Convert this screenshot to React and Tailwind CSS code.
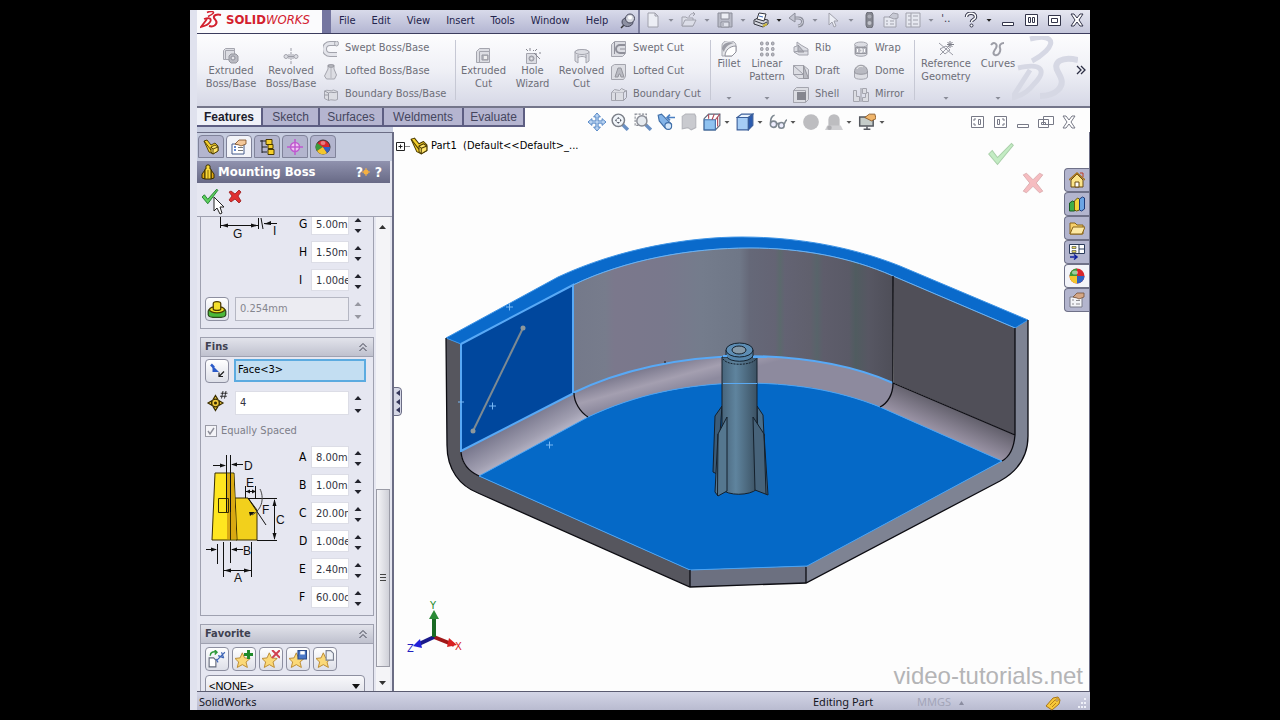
import React, { useState } from 'react'

const Icon = ({ size = 16, children }) => (
  <svg width={size} height={size} viewBox="0 0 16 16" fill="none" className="shrink-0" aria-hidden="true">
    {children}
  </svg>
)

const Caret = ({ color = '#8a8c98' }) => (
  <svg width="8" height="8" viewBox="0 0 8 8" className="shrink-0" aria-hidden="true">
    <path d="M1.5 3h5L4 5.8z" fill={color} />
  </svg>
)

/* ---------- ribbon icons (greyed out) ---------- */
const g = { stroke: '#a4a5ae', fill: '#dcdde3', strokeWidth: 1, strokeLinejoin: 'round' }
const d = { stroke: '#96979f', fill: '#b9bac2', strokeWidth: 1, strokeLinejoin: 'round' }

const ribbonIcons = {
  extrude: <><path {...g} d="M.5 2.5l2-2h9v9l-2 2h-9z" /><path {...g} d="M2.5 2.5h9v9h-9z" /><path {...d} d="M6 8l2-2h5l2 2v5l-2 2H8l-2-2z" /><circle cx="10" cy="10" r="2" fill="#e4e4e9" stroke="#8f909a" /></>,
  revolve: <><path stroke="#9b9ca6" d="M8 0v3M8 4v8M8 13v3" /><circle {...g} cx="3" cy="8.500" r="2" /><circle {...g} cx="13" cy="8.500" r="2" /><path stroke="#9b9ca6" d="M5 8.500h6M6 6v5M10 6v5" /></>,
  swept: <><path d="M14 2.500H7a5 5 0 0 0 0 11h7" stroke="#a2a3ac" strokeWidth="5" /><path d="M14 2.500H7a5 5 0 0 0 0 11h7" stroke="#e3e4ea" strokeWidth="3" /><ellipse {...g} cx="13.500" cy="2.500" rx="2" ry="2.500" /></>,
  loft: <><path {...g} d="M5 1h6v4l2.500 6-2 4h-8L1.500 12 5 5z" /><ellipse {...d} cx="8" cy="2" rx="3" ry="1.300" /><path stroke="#b5b6be" d="M8 4v10" /></>,
  boundary: <><path {...g} d="M1.500 4c3-2 6 1 9-1l4 1.500v8c-3 2-6-1-9 1l-4-2z" /><path stroke="#9b9ca6" d="M1.500 4l4 2c3-2 6 1 9-1.500M5.500 6v7.500M1 8h4" /></>,
  cut: <><path {...g} d="M.5 3.500l3-3h10v11l-3 3H.5z" /><path {...g} d="M3.500 3.500h10v11h-10z" /><path {...d} d="M6 7h6v5H6z" /><path fill="#eee" d="M8 8h3v3H8z" /></>,
  hole: <><path {...g} d="M1.500 5.500h10v10h-10z" /><circle {...d} cx="6.500" cy="10.500" r="2.500" /><circle cx="6.500" cy="10.500" r="1" fill="#eee" /><path stroke="#85868f" d="M9 5l6 6M1 1l2 2M5 0v3M12 1l-2 2M8 2l1 1M14 5h2" /></>,
  revcut: <><path {...g} d="M1 4c0-3 14-3 14 0v9l-3 2v-5c-1-2-7-2-8 0v5l-3-2z" /><ellipse {...g} cx="8" cy="4" rx="7" ry="2.500" /><path stroke="#9b9ca6" d="M4 10V7M12 10V7" /></>,
  sweptcut: <><path {...g} d="M.5 3.500l3-3h11v12l-3 3H.5z" /><path stroke="#8f909a" strokeWidth="2" d="M14 4H9a2.500 2.500 0 0 0 0 8h5" /><path stroke="#8f909a" d="M14 8H9M3.500 1v12" /></>,
  loftcut: <><path {...g} d="M.5 2.500l3-2h11v12l-2 3H.5z" /><path {...d} d="M7 4h3l3 9h-3l-1-3H8l-1 3H4z" /></>,
  boundcut: <><path {...g} d="M.5 5.500h12v8H.5z" /><path {...g} d="M.5 5.500l3-3 5 1 2-2 4 2-2 2" /><path stroke="#9b9ca6" d="M4.500 6v7M12.500 5.500l3-2v7l-3 3" /></>,
  fillet: <><path d="M1 15V5a7 5 0 0 1 14-1v6l-4 5z" fill="#e5e6ea" stroke="#a7a8b0" /><path d="M4 15c0-6 5-10 11-10v6l-4 4z" fill="#fff" stroke="#8f909a" /><path d="M1 8c0-5 6-8 12-6-5 1-9 4-10 9z" fill="#9c9da6" /></>,
  pattern: <>{[1.5, 7, 12.5].map(x => [1, 6.5, 12].map(y => <rect key={x + '-' + y} x={x} y={y} width="2.500" height="3" rx="1" {...d} />))}</>,
  rib: <><path {...g} d="M1 6l3-1V1l4 3 7 4v6H6l-5-3z" /><path {...d} d="M5 11V4l6 7z" /><path stroke="#9b9ca6" d="M1 11l5-1h9" /></>,
  draft: <><path {...g} d="M.5 1.500h10l5 4v9h-10l-5-4z" /><path {...d} d="M10.500 1.500l5 13h-5z" /><path stroke="#9b9ca6" d="M.5 1.500l10 9M.5 10.500h10" /></>,
  shell: <><path {...g} d="M.5 3.500l3-3h12v12l-3 3H.5z" /><path {...g} d="M.5 3.500h12v12H.5z" /><path d="M4 5h9v8H4z" fill="#85868f" /></>,
  wrap: <><path {...g} d="M2 4v9c0 3 12 3 12 0V4" /><ellipse {...g} cx="8" cy="3.500" rx="6.500" ry="2.500" /><path {...d} d="M2.500 6.500h11v6h-11z" /><path stroke="#fff" d="M4.500 8v3M7 8h2v3H7M11.500 8v3" /></>,
  dome: <><path {...g} d="M1.500 8v5c0 3 13 3 13 0V8" /><path {...d} d="M1.500 8C1.500-1 14.500-1 14.500 8c0 3-13 3-13 0z" /><path d="M4 5c1-3 5-3 6-2" stroke="#eee" /></>,
  mirror: <><path {...g} d="M.5 3.500h3v6h3v5h-6zM15.500 5.500h-3v5h-3v4h6z" /><path {...d} d="M8 1v14" /><path {...g} d="M9.500 1.500h4v5h-4z" /></>,
  refgeo: <><path stroke="#9b9ca6" d="M1 2l14 12M2 14L13 3M2 8l5 5 5-4-4-4z" /><path stroke="#7e7f89" d="M12 0v7M9 3.500h7M9.500 1l5 5M14.500 1l-5 5" /></>,
  curves: <path d="M1 4c3-4 7-1 5 3-2 3-4 6-1 7 4 1 6-4 5-7-1-3 1-5 4-5" stroke="#9d9ea7" strokeWidth="2" />,
}

const BigButton = ({ icon, lines, width, low, caret }) => (
  <button className={`flex flex-col items-center ${width} ${low ? 'pt-[14px]' : 'pt-[7px]'} text-[#6d6e78] leading-[13px]`}>
    <Icon size={16}>{ribbonIcons[icon]}</Icon>
    {lines.map(l => <span key={l} className="whitespace-nowrap">{l}</span>)}
    {caret && <span className="mt-auto pb-[4px]"><Caret /></span>}
  </button>
)

const RibbonList = ({ items, className }) => (
  <ul className={`pt-[3px] ${className}`}>
    {items.map(([icon, text]) => (
      <li key={text}>
        <button className="flex h-[23px] items-center gap-[6px] whitespace-nowrap text-[#6d6e78]">
          <Icon>{ribbonIcons[icon]}</Icon>
          {text}
        </button>
      </li>
    ))}
  </ul>
)

const Divider = () => <div className="my-[6px] w-px shrink-0 bg-[#c6c8d4]" />

/* ---------- top bar ---------- */
const menus = ['File', 'Edit', 'View', 'Insert', 'Tools', 'Window', 'Help']

const gs = '#a0a1ac'
const quick = [
  ['New', <path key="a" d="M3 1h7l3 3v11H3zM10 1v3h3" stroke={gs} fill="#eceef5" />, true],
  ['Open', <g key="a" stroke={gs} fill="#dcdee8"><path d="M1 5h4l1 1h6v8H1z" /><path d="M1 14l3-6h11l-3 6z" /><path d="M8 5c1-3 3-4 5-3M12 0l2 2-2 2" fill="none" /></g>, true],
  ['Save', <g key="a" stroke="#8c8e9a" fill="#b9bbc7"><path d="M1 1h14v14H1z" /><path d="M4 1h8v6H4z" fill="#eceef5" /><path d="M4 10h8v5H4z" fill="#dfe1ea" /><path d="M6 11v3" /></g>, true],
  ['Print', <g key="a" stroke="#34363f"><path d="M1 8l4-2 10 2v4l-5 3-9-3z" fill="#d5d7de" /><path d="M4 7l2-6 7 1-2 7z" fill="#fff" /><path d="M6 4l4 1" stroke="#3a6cc0" /><path d="M2 9l8 3 4-2" /><path d="M10 14l4-2" stroke="#c9b53a" strokeWidth="2" /></g>, true, '#222'],
  ['Undo', <g key="a"><path d="M3 6h6c6 0 6 7 0 8" stroke="#8c8e9a" strokeWidth="3" /><path d="M3 6h6c6 0 6 7 0 8" stroke="#d3d5df" /><path d="M6 1v9L0 6z" fill="#c4c6d2" stroke="#8c8e9a" /></g>, true],
  ['Select', <path key="a" d="M4 1v12l3-3 2 5 2-1-2-5h4z" stroke={gs} fill="#eceef5" />, true],
  ['Rebuild', <g key="a"><rect x="5" y="0" width="7" height="16" rx="3" fill="#84868f" stroke="#6d6f79" /><circle cx="8.500" cy="4.500" r="2" fill="#a9abb4" /><circle cx="8.500" cy="11" r="2" fill="#bfc1c9" /></g>],
  ['File Properties', <g key="a" stroke={gs} fill="#e6e8f0"><path d="M1 5h12v10H1z" /><path d="M3 9h2M7 9h4M3 12h2M7 12h4" /><path d="M6 5l4-4 5 1v4l-4 1z" fill="#c7c9d4" /></g>],
  ['Options', <g key="a" stroke={gs}><path d="M1 1h14v14H1z" fill="#e6e8f0" /><path d="M3 4h3M3 8h3M3 12h3M6 1v14M8 4h5M8 8h5M8 12h5" /></g>, true],
]

const WindowButton = ({ label, color, children }) => (
  <button aria-label={label}>
    <Icon><g stroke={color} fill="#fff">{children}</g></Icon>
  </button>
)

const closePath = 'M2 2h3l3 4 3-4h3l-4 6 4 6h-3l-3-4-3 4H2l4-6z'

const TopBar = () => (
  <header className="flex h-[24px] shrink-0 border-b border-[#3c3d5e]">
    <div className="flex w-[125px] shrink-0 items-center bg-[#fbfbfd] pb-[4px] pl-[3px] text-[13px] leading-[16px] text-[#d3202e]">
      <svg width="22" height="18" viewBox="0 0 22 18" fill="none" stroke="#d3202e" aria-hidden="true">
        <path d="M7 1.500c4-2 8-1 6 1-1 1-3 2-5 3" strokeWidth="1.500" />
        <path d="M4 8c6-2 8 0 6 3-2 3-5 4-9 5l6-8" strokeWidth="1.800" />
        <path d="M21 4c-4-1-8 0-7 3 1 2 4 3 2 6-1 2-4 3-7 2" strokeWidth="2" />
      </svg>
      <span className="pl-[4px]"><b>SOLID</b><i>WORKS</i></span>
    </div>
    <div className="w-[9px] shrink-0 bg-[#7576a0]" />
    <nav className="flex shrink-0 items-center gap-4 border-r-2 border-[#7f81a0] bg-linear-to-b from-[#d8daea] to-[#b4b6d2] pr-[2px] pb-px pl-[8px] text-[#23244c]">
      {menus.map(m => <a key={m} href="#">{m}</a>)}
      <button aria-label="Pin menu" className="-ml-[4px]">
        <Icon>
          <path d="M1 15l5-5" stroke="#333" strokeWidth="1.500" />
          <ellipse cx="7.500" cy="9" rx="5.500" ry="4.500" fill="#8d90a2" stroke="#44465a" />
          <circle cx="10" cy="5.500" r="4.500" fill="#d3d5de" stroke="#44465a" />
          <circle cx="10" cy="4.500" r="2" fill="#fff" />
        </Icon>
      </button>
    </nav>
    <div className="flex min-w-0 flex-1 items-center gap-[6px] bg-linear-to-b from-[#e6e7f1] to-[#c5c7db] px-[5px] pb-[4px]">
      {quick.map(([label, art, caret, color]) => (
        <React.Fragment key={label}>
          <button aria-label={label}><Icon>{art}</Icon></button>
          {caret && <Caret color={color} />}
        </React.Fragment>
      ))}
      <span className="text-[#33354a]">'..</span>
      <div className="ml-auto flex items-center gap-[7px]">
        <button aria-label="Help" className="flex items-center gap-[6px]">
          <Icon>
            <path d="M3.500 5c0-5 9-5 9 0 0 3-4 2-4 5" stroke="#33354a" strokeWidth="3.500" />
            <path d="M3.500 5c0-5 9-5 9 0 0 3-4 2-4 5" stroke="#fff" strokeWidth="1.500" />
            <circle cx="8.500" cy="13.500" r="1.500" fill="#fff" stroke="#33354a" />
          </Icon>
          <Caret color="#222" />
        </button>
        <WindowButton label="Minimize" color="#33354a"><path d="M2.500 10.500h11v3h-11z" /></WindowButton>
        <WindowButton label="Tile" color="#33354a"><path d="M2.500 2.500h12v11h-12z" /><path d="M5.500 5.500h2v5h-2zM9.500 5.500h2v5h-2z" /></WindowButton>
        <WindowButton label="Restore" color="#33354a"><path d="M2.500 3.500h12v10h-12z" /><path d="M5.500 6.500h6v4h-6z" /></WindowButton>
        <WindowButton label="Close" color="#33354a"><path d={closePath} /></WindowButton>
      </div>
    </div>
  </header>
)

const Ribbon = () => (
  <section className="relative flex h-[74px] shrink-0 overflow-hidden border-b-2 border-[#74768a] bg-linear-to-b from-[#fdfdfe] via-[#eff0f6] to-[#d6d8e6] pl-[4px]">
    <svg className="absolute top-[2px] right-[12px]" width="66" height="66" viewBox="0 0 66 66" fill="none" stroke="#d6d8e4" aria-hidden="true">
      <path d="M18 3c20-5 26 2 16 12-4 4-8 7-14 10" strokeWidth="5" />
      <path d="M6 32c26-6 28 4 16 16C16 56 10 60 0 62L18 34" strokeWidth="5" />
      <path d="M66 24c-16-4-26 2-20 12 4 7 6 12 0 18-4 4-10 6-18 6" strokeWidth="6" />
    </svg>
    <BigButton icon="extrude" lines={['Extruded', 'Boss/Base']} width="w-[60px]" low />
    <BigButton icon="revolve" lines={['Revolved', 'Boss/Base']} width="w-[60px]" low />
    <RibbonList className="w-[134px] pl-[2px]" items={[['swept', 'Swept Boss/Base'], ['loft', 'Lofted Boss/Base'], ['boundary', 'Boundary Boss/Base']]} />
    <Divider />
    <div className="flex pl-[3px]">
      <BigButton icon="cut" lines={['Extruded', 'Cut']} width="w-[49px]" low />
      <BigButton icon="hole" lines={['Hole', 'Wizard']} width="w-[49px]" low />
      <BigButton icon="revcut" lines={['Revolved', 'Cut']} width="w-[49px]" low />
    </div>
    <RibbonList className="w-[104px] pl-[5px]" items={[['sweptcut', 'Swept Cut'], ['loftcut', 'Lofted Cut'], ['boundcut', 'Boundary Cut']]} />
    <Divider />
    <BigButton icon="fillet" lines={['Fillet']} width="w-[36px]" caret />
    <BigButton icon="pattern" lines={['Linear', 'Pattern']} width="w-[40px]" caret />
    <RibbonList className="w-[60px] pl-[6px]" items={[['rib', 'Rib'], ['draft', 'Draft'], ['shell', 'Shell']]} />
    <RibbonList className="w-[67px] pl-[6px]" items={[['wrap', 'Wrap'], ['dome', 'Dome'], ['mirror', 'Mirror']]} />
    <Divider />
    <BigButton icon="refgeo" lines={['Reference', 'Geometry']} width="w-[62px]" caret />
    <BigButton icon="curves" lines={['Curves']} width="w-[42px]" caret />
    <button aria-label="More commands" className="relative ml-auto pr-[4px]">
      <svg width="10" height="10" viewBox="0 0 10 10" fill="none" stroke="#2c2e44" strokeWidth="1.300"><path d="M1 1l4 4-4 4M5 1l4 4-4 4" /></svg>
    </button>
  </section>
)

/* ---------- command tabs + heads-up toolbar ---------- */
const tabs = [['Features', 'w-[66px]'], ['Sketch', 'w-[57px]'], ['Surfaces', 'w-[64px]'], ['Weldments', 'w-[80px]'], ['Evaluate', 'w-[61px]']]

const headsUp = [
  ['Pan', <path key="a" d="M8 0l3 3.500H9V7h3.500V5L16 8l-3.500 3V9H9v3.500h2L8 16l-3-3.500h2V9H3.500v2L0 8l3.500-3v2H7V3.500H5z" fill="#b8d2f0" stroke="#4a7fc2" strokeWidth=".8" />],
  ['Zoom to Fit', <g key="a"><path d="M10 10l5 5" stroke="#6a90c4" strokeWidth="3" /><circle cx="6.500" cy="6.500" r="5.500" fill="#f2f6fa" stroke="#7b7f88" strokeWidth="1.300" /><path d="M6.500 3.500L8 5H5zM6.500 9.500L8 8H5zM3.500 6.500L5 5v3zM9.500 6.500L8 5v3z" fill="#555a66" /></g>],
  ['Zoom to Area', <g key="a"><path d="M10 10l5 5" stroke="#6a90c4" strokeWidth="3" /><path d="M1 1h10v10H1z" stroke="#8a8d96" strokeDasharray="2 1" /><circle cx="7" cy="7" r="4.500" fill="#e6eaef" stroke="#8a8d96" strokeWidth="1.300" /></g>],
  ['Previous View', <g key="a"><path d="M1 2l3-1 9 9-2 4-4-1-5-6z" fill="#84b4e8" stroke="#3f6ea8" /><circle cx="10" cy="11.500" r="3" fill="#d3e6fa" stroke="#3f6ea8" /><path d="M16 4H9M11.500 1.500L9 4l2.500 2.500" stroke="#4a7fc2" strokeWidth="1.500" /></g>],
  ['Section View', <path key="a" d="M2 3l3-2h8l1 2v10l-4 2-3-2-5 1z" fill="#c9cacf" stroke="#b5b6bc" />],
  ['View Orientation', <g key="a"><path d="M1 5l4-4h10v10l-4 4H1z" fill="#fff" stroke="#5a6478" /><path d="M1 6h10v9H1z" fill="#8fc2f0" stroke="#3f6ea8" /><path d="M11 6l4-5M5 1v4M10 1l-2 5M13 3v9" stroke="#b04a5a" /></g>, true],
  ['Display Style', <g key="a"><path d="M1 4l4-3h10l-4 3z" fill="#e9f3fd" stroke="#3b5f9a" /><path d="M1 4h10v11H1z" fill="#a5ccf5" stroke="#3b5f9a" /><path d="M11 4l4-3v10l-4 4z" fill="#2c5cb0" stroke="#3b5f9a" /></g>, true],
  ['Hide/Show Items', <g key="a" stroke="#7d8790" strokeWidth="1.400"><circle cx="4" cy="10" r="2.800" fill="#eef" /><circle cx="11" cy="11" r="2.500" fill="#eef" /><path d="M1.500 9C1 5 3 2 5 2M7 10c1-1 2-1 2 0M13.500 10c1-2 1-4 3-4" /></g>, true],
  ['Edit Appearance', <circle key="a" cx="8" cy="8" r="7" fill="#bdbdc0" />],
  ['Apply Scene', <g key="a" fill="#bdbdc0"><path d="M3 12V6a5 5 0 0 1 10 0v6z" /><path d="M0 15l2-4h12l2 4z" fill="#cfcfd2" /><circle cx="4" cy="13" r="2" fill="#aeaeb2" /></g>, true],
  ['View Settings', <g key="a"><path d="M1.500 3.500h12v8h-12z" fill="#c5ccc9" stroke="#55585f" strokeWidth="1.300" /><path d="M5 14.500h6M8 12v2" stroke="#55585f" strokeWidth="1.300" /><path d="M6 4l4-3h5l1 4-4 2z" fill="#f0b56a" stroke="#8a5a2a" strokeWidth=".8" /></g>, true],
]

const CommandRow = () => {
  const [active, setActive] = useState('Features')
  return (
    <div className="flex h-[24px] shrink-0 items-start bg-[linear-gradient(to_right,#c7cde0_196px,#fdfdfd_196px)] font-['Liberation_Sans',Arial,sans-serif] text-[12px]">
      <nav className="flex shrink-0">
        {tabs.map(([name, width]) => (
          <button
            key={name}
            onClick={() => setActive(name)}
            className={`h-[19px] border-r-2 border-b-2 border-[#5d5e82] leading-[16px] ${width} ${active === name ? 'bg-[#eff1f8] font-bold text-[#1c1d2c]' : 'bg-[#b5b5d0] text-[#45465e]'}`}
          >
            {name}
          </button>
        ))}
      </nav>
      <div className="flex items-center gap-[5px] pt-[5px] pl-[63px]">
        {headsUp.map(([label, art, caret]) => (
          <button key={label} aria-label={label} className="flex items-center gap-[2px]">
            <Icon size={18}>{art}</Icon>
            {caret && <Caret color="#555" />}
          </button>
        ))}
      </div>
      <div className="ml-auto flex items-center gap-[7px] pt-[6px] pr-[13px]">
        <WindowButton label="Split left" color="#777986"><path d="M2.500 2.500h12v11h-12zM9.500 5.500h2v5h-2zM7 5H5v2M7 11H5V9" /></WindowButton>
        <WindowButton label="Split right" color="#777986"><path d="M2.500 2.500h12v11h-12zM5.500 5.500h2v5h-2zM10 5h2v2M10 11h2V9" /></WindowButton>
        <WindowButton label="Minimize document" color="#777986"><path d="M2.500 10.500h11v3h-11z" /></WindowButton>
        <WindowButton label="Restore document" color="#777986"><path d="M5.500 2.500h10v8h-10zM.5 5.500h10v8H.5zM3.500 8.500h4v2h-4z" /></WindowButton>
        <WindowButton label="Close document" color="#777986"><path d={closePath} /></WindowButton>
      </div>
    </div>
  )
}

/* ---------- shared coloured icons ---------- */
const partArt = <g stroke="#4a3a00" strokeWidth=".9" strokeLinejoin="round"><path d="M1 2l3-1 4 5 4-2 3 3v5l-5 3-4-2z" fill="#f5cf2a" /><path d="M8 8l4-2 3 2v4l-5 3-2-2z" fill="#ffe46a" /><path d="M1 2l7 9M8 8l2 2v5M10 10l5-2" /></g>
const ballArt = <><circle cx="8" cy="8" r="7.500" fill="#d8262c" /><path d="M8 8V.5A7.500 7.500 0 0 0 .5 8z" fill="#3b9a3a" /><path d="M8 8H.5A7.500 7.500 0 0 0 8 15.500z" fill="#f3c62e" /><path d="M8 8v7.500A7.500 7.500 0 0 0 15.500 8z" fill="#2f62c4" /><ellipse cx="6" cy="4.500" rx="3" ry="2" fill="#fff" opacity=".5" /></>
const pageArt = <><path d="M1 5h12v10H1z" fill="#fff" stroke="#445a8a" /><path d="M3 8h2M3 11h2" stroke="#2f62c4" strokeWidth="1.500" /><path d="M7 8.500h5M7 11.500h5" stroke="#777" /><path d="M4 5l4-4h7v4l-5 2-2-1z" fill="#f4c89a" stroke="#7a4a20" strokeWidth=".8" /></>

const managerTabs = [
  ['Feature tree', partArt],
  ['Property manager', pageArt],
  ['Configurations', <><path d="M3 1v13M1 2h6M3 8h5M3 13h5" stroke="#222" /><g fill="#f5cf2a" stroke="#4a3a00"><path d="M7 .5h6v5H7zM9 5.500h5v4H9zM9 10.500h6v5H9z" /></g></>],
  ['Dimensions', <g stroke="#c05ad0" strokeWidth="1.500"><circle cx="8" cy="8" r="4.500" fill="#efc6f2" /><path d="M8 0v16M0 8h16" /></g>],
  ['Display', <g key="a"><circle cx="8" cy="8" r="7" fill="#d8262c" stroke="#333" /><path d="M8 8L2 4a7 7 0 0 0 0 8z" fill="#3b9a3a" /><path d="M8 8l-6 4a7 7 0 0 0 10 2z" fill="#f3c62e" /><path d="M8 8l4 6a7 7 0 0 0 3-6z" fill="#2f62c4" /><ellipse cx="8" cy="4" rx="2.500" ry="2" fill="#fff" opacity=".4" /></g>],
]

const Spinner = ({ name, dim }) => (
  <span className={`flex w-[10px] flex-col items-center justify-between pt-[2px] ${dim ? 'opacity-40' : ''}`}>
    <button aria-label={`Increase ${name}`}>
      <svg width="8" height="10" viewBox="0 0 8 10"><path d="M.5 7h7L4 3z" fill="#22232c" /></svg>
    </button>
    <button aria-label={`Decrease ${name}`}>
      <svg width="8" height="10" viewBox="0 0 8 10"><path d="M.5 4h7L4 8z" fill="#22232c" /></svg>
    </button>
  </span>
)

const Param = ({ group, name, value }) => (
  <div className="flex h-[22px] items-center">
    <label htmlFor={group + name} className="w-[12px] text-[12px] text-black">{name}</label>
    <input id={group + name} defaultValue={value} className="h-[22px] w-[38px] border border-[#dcdde6] bg-white pl-[4px] text-[#33343f]" />
    <span className="ml-[4px] flex"><Spinner name={name} /></span>
  </div>
)

const GroupHeader = ({ children }) => (
  <button className="flex h-[19px] w-full items-center justify-between border-b border-[#9fa1b0] bg-linear-to-b from-[#e2e3eb] to-[#bfc1ce] px-[4px] font-bold text-[#3f4150]">
    {children}
    <svg width="10" height="10" viewBox="0 0 10 10" fill="none" stroke="#3f4150" className="mr-[1px]"><path d="M1.500 5L5 1.500 8.500 5M1.500 9L5 5.500 8.500 9" /></svg>
  </button>
)

const SquareButton = ({ label, children }) => (
  <button aria-label={label} className="flex size-[24px] shrink-0 items-center justify-center rounded border border-[#8d8fa0] bg-linear-to-b from-white to-[#dddfe8]">
    {children}
  </button>
)

const star = <path d="M6.500 2.500L8.500 7l5 .5-3.700 3.200 1.200 4.800-4.500-2.500L2 15.500l1.200-4.800L0 7.500 4.500 7z" fill="#fbd978" stroke="#b8862a" strokeWidth=".8" />
const favorites = [
  ['Apply defaults', <g key="a"><path d="M1 7h4l2 2v6H1z" fill="#fff" stroke="#666c7c" /><path d="M2 5c0-3 3-4 5-3M6 0l2 2-2 2" stroke="#2f9a3a" strokeWidth="1.300" /><path d="M8 9l7-7M9 5l5 2M12 2l2 5M7 8l2 3" stroke="#3a62b4" /></g>],
  ['Add favorite', <g key="a">{star}<path d="M12 0v8M8 4h8" stroke="#1f8a2a" strokeWidth="2.600" /></g>],
  ['Delete favorite', <g key="a">{star}<path d="M9 0l7 7M16 0L9 7" stroke="#d0404e" strokeWidth="1.800" /></g>],
  ['Save favorite', <g key="a">{star}<path d="M8 .5h7.500V8H8z" fill="#4a78c8" stroke="#2a4a8a" /><path d="M10 1h4v3h-4z" fill="#fff" /></g>],
  ['Load favorite', <g key="a">{star}<path d="M9 .5h4l2.500 2.500v6H9z" fill="#eef1f6" stroke="#7a8090" /></g>],
]

const FinDiagram = () => (
  <svg width="90" height="136" viewBox="202 449 90 136" fill="none" className="mt-[3px] shrink-0" role="img" aria-label="Fin dimensions">
    <path d="M234 498h14l9 12v30h-21z" fill="#f2d01c" stroke="#3a2e00" />
    <path d="M215 473h19l3 67h-25z" fill="#ffe620" stroke="#3a2e00" />
    <path d="M227 474h6.500l3 65H227z" fill="#d9a912" />
    <path d="M218.500 498.500h10v14h-10zM230.500 473v67" stroke="#3a2e00" />
    <g stroke="#111">
      <path d="M226.500 455v57M230.500 455v57M213 465.500h11M232 464.500h11M245.500 486v12M255.500 486v12M246 491.500h10" />
      <path d="M248 498.500h29M257 540.500h20M274.500 500v39M248 498l18 27" />
      <path d="M260 489c4 8 3 20-8 26" stroke="#444" />
      <path d="M206 549.500h10M217.500 544v20M223.500 542v35M230.500 542v21M232 549.500h11M224 570.500h27M251.500 542v35" />
    </g>
    <g fill="#111">
      <path d="M226 465.500l-6-2v4zM231 464.500l6-2v4zM246 491.500l4-2v4zM256 491.500l-4-2v4zM274.500 499l-2 7h4zM274.500 540l-2-7h4zM217 549.500l-6-2v4zM231 549.500l6-2v4zM224 570.500l7-2v4zM251 570.500l-7-2v4zM255 512l-5 4-1-4z" />
    </g>
    <g fill="#111" fontSize="12" fontFamily="'Liberation Sans', Arial, sans-serif">
      <text x="244" y="470">D</text>
      <text x="246" y="487">E</text>
      <text x="262" y="514">F</text>
      <text x="276" y="524">C</text>
      <text x="243" y="555">B</text>
      <text x="234" y="582">A</text>
    </g>
  </svg>
)

const PropertyPanel = () => (
  <aside className="flex w-[197px] shrink-0 flex-col overflow-hidden border-t border-r-2 border-[#6b6d85] bg-[#e6e7f1]">
    <div className="flex h-[28px] shrink-0 gap-[2px] bg-[#c7cde0] pt-[2px] pl-[1px]">
      {managerTabs.map(([label, art], i) => (
        <button key={label} aria-label={label} className={`flex h-[23px] w-[26px] items-center justify-center rounded-t border border-[#80839a] ${i === 1 ? 'bg-[#f3f4f9]' : 'bg-[#b3b5ce]'}`}>
          <Icon>{art}</Icon>
        </button>
      ))}
    </div>
    <div className="mr-[2px] flex h-[22px] shrink-0 items-center bg-linear-to-b from-[#9092ae] to-[#686a86] pl-[3px] text-[13px] font-bold text-white">
      <Icon><path d="M2 10l3-4v9l-3-1zM14 10l-3-4v9l3-1z" fill="#e0a810" stroke="#3a2e00" /><path d="M5 15V5h1V2c0-1.500 4-1.500 4 0v3h1v10z" fill="#f8d83a" stroke="#3a2e00" /><path d="M8 6v9" stroke="#8a6a00" /></Icon>
      <h2 className="pl-[2px]">Mounting Boss</h2>
      <button aria-label="What's new" className="relative ml-auto w-[16px] text-left text-[14px]">
        ?<svg width="8" height="8" viewBox="0 0 8 8" className="absolute top-[6px] right-[2px]"><circle cx="4" cy="4" r="2.500" fill="#f6b040" /><path d="M4 0v8M0 4h8" stroke="#f6b040" /></svg>
      </button>
      <button aria-label="Help topic" className="pr-[8px] pl-[3px] text-[14px]">?</button>
    </div>
    <div className="relative flex h-[34px] shrink-0 gap-[8px] border-b border-[#9fa1b0] pt-[5px] pl-[4px]">
      <button aria-label="OK" className="h-[18px]"><Icon size={18}><path d="M1 8l2-2 3 4 8-9 1 1-9 12z" fill="#5ed05e" stroke="#1c7a2a" strokeWidth=".8" /></Icon></button>
      <button aria-label="Cancel" className="h-[18px]"><Icon><path d="M2 3l2-1 4 3 4-4 2 2-3 4 3 5-2 2-4-4-4 3-2-2 3-4z" fill="#e03030" stroke="#9a1a1a" strokeWidth=".8" /></Icon></button>
      <svg width="12" height="20" viewBox="0 0 12 20" className="absolute top-[13px] left-[16px]"><path d="M1 1v14l3-3 3 6 2-1-2-6h4z" fill="#fff" stroke="#222" /></svg>
    </div>

    <div className="flex min-h-0 flex-1 overflow-hidden pl-[3px]">
      <div className="w-[174px] overflow-hidden">
        <section className="-mt-[4px] border border-t-0 border-[#9fa1b0] pr-[10px] pb-[7px] pl-[4px]">
          <div className="flex justify-between">
            <svg width="80" height="28" viewBox="205 213 80 28" fill="none" aria-hidden="true">
              <path d="M220.500 217v11M221 225.500h37M258.500 218v11M261 218l2 11M264 223.500h13" stroke="#111" />
              <path d="M221 225.500l7-2v4zM258 225.500l-7-2v4zM264 224l7-3v4z" fill="#111" />
              <g fill="#111" fontSize="12" fontFamily="'Liberation Sans', Arial, sans-serif"><text x="233" y="238">G</text><text x="273" y="235">I</text></g>
            </svg>
            <div className="flex flex-col gap-[6px]">
              <Param group="boss" name="G" value="5.00mm" />
              <Param group="boss" name="H" value="1.50mm" />
              <Param group="boss" name="I" value="1.00deg" />
            </div>
          </div>
          <div className="mt-[6px] flex">
            <SquareButton label="Select mating part">
              <Icon size={20}>
                <path d="M1 9.500c0-3 14-3 14 0v3c0 3-14 3-14 0z" fill="#4ab83a" stroke="#2a4a1a" />
                <ellipse cx="8" cy="8.500" rx="6" ry="2.500" fill="#f5e02a" stroke="#4a3a00" />
                <path d="M5 3.500c0-2 6-2 6 0V8c0 1.500-6 1.500-6 0z" fill="#f5e02a" stroke="#4a3a00" />
              </Icon>
            </SquareButton>
            <input aria-label="Clearance" defaultValue="0.254mm" className="ml-[6px] w-[114px] border border-[#b5b7c3] bg-[#ececf2] pl-[4px] text-[#85868f]" />
            <span className="ml-[4px] flex"><Spinner name="clearance" dim /></span>
          </div>
        </section>

        <section className="mt-[8px] border border-[#9fa1b0]">
          <GroupHeader>Fins</GroupHeader>
          <div className="px-[4px] pt-[2px] pb-[7px]">
            <div className="flex gap-[5px]">
              <SquareButton label="Reverse direction">
                <Icon><path d="M2 1.500l3 3" stroke="#2a5ac8" strokeWidth="2.500" /><path d="M9.500 9V2.500L3 9z" fill="#2a5ac8" transform="rotate(90 6.500 6)" /><path d="M15 8.500l-5 5M10 9.500v4h4" stroke="#222" strokeWidth="1.200" /></Icon>
              </SquareButton>
              <input aria-label="Direction face" defaultValue="Face<3>" className="h-[23px] w-[132px] border-2 border-[#5cabe0] bg-[#c3def2] pb-[2px] pl-[2px] text-black" />
            </div>
            <div className="mt-[8px] flex">
              <span className="w-[30px]">
                <Icon size={24}>
                  <g fill="#f0c83a" stroke="#3a2e00" strokeWidth=".8"><path d="M7 3l1.500 2.500h-3zM7 13l1.500-2.500h-3zM2 8l2.500-1.500v3zM12 8l-2.500-1.500v3z" /><circle cx="7" cy="8" r="2.500" /><circle cx="7" cy="8" r=".6" fill="#222" /></g>
                  <path d="M12 0l-1 5M14 0l-1 5M10.500 1.500H15M10 3.500h4.500" stroke="#222" strokeWidth=".6" />
                </Icon>
              </span>
              <input aria-label="Number of fins" defaultValue="4" className="h-[24px] w-[114px] border border-[#dcdde6] bg-white pb-[2px] pl-[4px] text-[#33343f]" />
              <span className="ml-[4px] flex"><Spinner name="number of fins" /></span>
            </div>
            <label className="mt-[8px] flex h-[16px] items-center gap-[4px] text-[#7d7e89]">
              <input type="checkbox" defaultChecked className="peer absolute size-[12px] appearance-none border border-[#9a9ba6] bg-[#f4f4f8]" />
              <svg width="12" height="12" viewBox="0 0 12 12" fill="none" className="pointer-events-none relative opacity-0 peer-checked:opacity-100"><path d="M3 6l2 3 4-6" stroke="#8d8e99" strokeWidth="1.400" /></svg>
              Equally Spaced
            </label>
            <div className="mt-[7px] -ml-[3px] flex justify-between pr-[6px]">
              <FinDiagram />
              <div className="flex flex-col gap-[6px]">
                <Param group="fin" name="A" value="8.00mm" />
                <Param group="fin" name="B" value="1.00mm" />
                <Param group="fin" name="C" value="20.00mm" />
                <Param group="fin" name="D" value="1.00deg" />
                <Param group="fin" name="E" value="2.40mm" />
                <Param group="fin" name="F" value="60.00deg" />
              </div>
            </div>
          </div>
        </section>

        <section className="mt-[8px] border border-[#9fa1b0]">
          <GroupHeader>Favorite</GroupHeader>
          <div className="px-[4px] pt-[3px]">
            <div className="flex gap-[3px]">
              {favorites.map(([label, art]) => (
                <SquareButton key={label} label={label}><Icon size={18}>{art}</Icon></SquareButton>
              ))}
            </div>
            <div className="relative mt-[4px] w-[160px]">
              <select aria-label="Favorite" className="h-[22px] w-full appearance-none rounded-sm border border-[#8d8fa0] bg-linear-to-b from-[#f8f8fb] to-[#dfe0e8] pl-[3px] font-['Liberation_Sans',Arial,sans-serif] text-black">
                <option>&lt;NONE&gt;</option>
              </select>
              <svg width="8" height="5" viewBox="0 0 8 5" className="absolute top-[9px] right-[5px]"><path d="M0 0h8L4 5z" fill="#111" /></svg>
            </div>
          </div>
        </section>
      </div>

      <div className="ml-[2px] flex w-[14px] flex-col items-center bg-[#f4f4f7]">
        <svg width="8" height="16" viewBox="0 0 8 16" className="shrink-0"><path d="M0 12h7L3.500 8z" fill="#333" /></svg>
        <div className="flex-1" />
        <div className="flex h-[178px] w-full items-center justify-center border border-[#9a9ba6] bg-linear-to-r from-[#f4f4f7] to-[#cfd0d8]">
          <svg width="6" height="8" viewBox="0 0 6 8" stroke="#444"><path d="M0 .5h6M0 3.500h6M0 6.500h6" /></svg>
        </div>
        <svg width="8" height="24" viewBox="0 0 8 24" className="shrink-0"><path d="M0 14h7l-3.500 4z" fill="#333" /></svg>
      </div>
    </div>
  </aside>
)

/* ---------- graphics area ---------- */
const Model = () => (
  <svg viewBox="394 132 695 559" className="absolute inset-0 size-full" fill="none" role="img" aria-label="Part1">
    <defs>
      <linearGradient id="wall" gradientUnits="userSpaceOnUse" x1="573" y1="0" x2="894" y2="0">
        <stop offset="0" stopColor="#74798a" />
        <stop offset=".1" stopColor="#777c8c" />
        <stop offset=".13" stopColor="#7b788c" />
        <stop offset=".28" stopColor="#79788c" />
        <stop offset=".4" stopColor="#747c8c" />
        <stop offset=".52" stopColor="#6f7787" />
        <stop offset=".55" stopColor="#656878" />
        <stop offset=".63" stopColor="#646474" />
        <stop offset=".645" stopColor="#5c696d" />
        <stop offset=".66" stopColor="#636373" />
        <stop offset=".74" stopColor="#60606d" />
        <stop offset=".76" stopColor="#58646a" />
        <stop offset=".78" stopColor="#5e5d6b" />
        <stop offset=".86" stopColor="#5a5a67" />
        <stop offset=".88" stopColor="#505c60" />
        <stop offset=".92" stopColor="#575763" />
        <stop offset="1" stopColor="#4e4e58" />
      </linearGradient>
      <linearGradient id="bendL" gradientUnits="userSpaceOnUse" x1="515" y1="420" x2="532" y2="450">
        <stop offset="0" stopColor="#75748a" />
        <stop offset=".7" stopColor="#a09eb0" />
        <stop offset="1" stopColor="#b9b7c8" />
      </linearGradient>
      <linearGradient id="bendM" gradientUnits="userSpaceOnUse" x1="640" y1="368" x2="648" y2="397">
        <stop offset="0" stopColor="#77758a" />
        <stop offset=".6" stopColor="#a49fb0" />
        <stop offset="1" stopColor="#8d8a9e" />
      </linearGradient>
      <linearGradient id="bendR" gradientUnits="userSpaceOnUse" x1="955" y1="405" x2="942" y2="434">
        <stop offset="0" stopColor="#5b5964" />
        <stop offset="1" stopColor="#9a93a5" />
      </linearGradient>
      <linearGradient id="boss" gradientUnits="userSpaceOnUse" x1="721" y1="0" x2="758" y2="0">
        <stop offset="0" stopColor="#466278" />
        <stop offset=".4" stopColor="#5f849e" />
        <stop offset="1" stopColor="#3a4f60" />
      </linearGradient>
    </defs>

    {/* cut faces and outer silhouette */}
    <path d="M446 338L447 445C447 470 460 486 478 493L690 587L690 570L479 476C467 470 461 462 461 451V344z" fill="#56565e" />
    <path d="M690 570L807 566V583L690 587z" fill="#6c7080" />
    <path d="M1028 320V436C1028 456 1018 471 1000 481L806 583V566L1002 461C1011 455 1014 446 1015 435V328z" fill="#7e8393" />

    {/* top rim */}
    <path d="M446 338L558 277C620 248 690 237 742 237C800 237 855 248 900 266L1028 320L1015 328L893 276C850 257 800 248 750 248C690 248 625 260 573 285L461 344z" fill="#0a6acb" stroke="#3c93e6" />

    {/* inner walls */}
    <path d="M573 285C625 260 690 248 750 248C800 248 850 257 893 276V383C850 364 800 356 742 356C680 357 620 370 574 393z" fill="url(#wall)" />
    <path d="M893 276L1015 328V435L894 383z" fill="#504f58" />
    <path d="M461 344L573 285L574 393L461 451z" fill="#00479d" />

    {/* bends */}
    <path d="M461 451L574 393C574 402 580 412 588 417L479 476C467 470 462 462 461 451z" fill="url(#bendL)" />
    <path d="M574 393C620 370 680 357 742 356C800 356 850 364 894 383C894 395 888 403 880 407C835 389 790 383 742 383C685 384 635 395 588 417C580 412 574 402 574 393z" fill="url(#bendM)" />
    <path d="M893 383L1015 435C1014 447 1011 456 1002 461L880 407C888 403 893 394 893 383z" fill="url(#bendR)" />

    {/* floor */}
    <path d="M479 476L588 417C635 395 685 384 742 383C790 383 835 389 880 407L1002 461L807 566L690 570z" fill="#0569c7" stroke="#4ca3f2" />

    <path d="M461 344L573 285V393C620 370 680 357 742 356C800 356 850 364 893 383M574 393L461 451V344" stroke="#58a9f6" strokeWidth="2" />
    <path d="M573 285C625 260 690 248 750 248C800 248 850 257 893 276L1015 328" stroke="#6bb2f3" />
    <g stroke="#0c0c12" strokeWidth="1.300">
      <path d="M446 338L447 445C447 470 460 486 478 493L690 587L806 583L1000 481C1018 471 1028 456 1028 436V320" />
      <path d="M461 452C462 463 468 471 479 476M574 393C574 402 580 412 588 417M893 276V383C893 394 888 403 880 407M893 383L1015 435M1015 328V435C1014 447 1011 456 1002 461M690 570V587M806 567V583" />
    </g>

    {/* sketch line */}
    <path d="M523 328L473 431" stroke="#7d8a92" strokeWidth="2" />
    <circle cx="523" cy="328" r="2.500" fill="#8d989c" />
    <circle cx="473" cy="431" r="2.500" fill="#8d989c" />
    <path d="M506 307h7M509.500 303.500v7M489 406h7M492.500 402.500v7M546 445h7M549.500 441.500v7M458 402h6" stroke="#79b9f5" />
    <path d="M664 362h2" stroke="#111" />

    {/* boss and fins */}
    <g stroke="#14202c" strokeLinejoin="round">
      <path d="M722 406L715 416L713 472L717 474z" fill="#3c5c78" />
      <path d="M757 406L763 415L764 436L758 440z" fill="#4a6e8a" />
      <path d="M722 357V489C727 496 750 496 757 489V357z" fill="url(#boss)" />
      <path d="M727 417L718 434L715 492L718 496L727 491z" fill="#55778f" />
      <path d="M718 434L717.500 496" />
      <path d="M753 417L764 434L768 495L755 490z" fill="#47637a" />
      <path d="M764 434L766 494" />
      <path d="M723 359C727 366 752 366 756 359" strokeDasharray="2 1" />
      <path d="M726 350V356C729 363 750 363 753 356V350z" fill="#5585ab" />
      <ellipse cx="739.500" cy="350" rx="13.500" ry="7" fill="#5d8db4" />
      <ellipse cx="739" cy="350" rx="7" ry="4" fill="#8599a8" />
    </g>
    <path d="M723 383.500h34" stroke="#5aa9f2" />
    <path d="M723 356h4M753 357h14" stroke="#58a9f6" strokeWidth="2" />

    {/* triad */}
    <path d="M434 637L454 645" stroke="#a01818" strokeWidth="4" />
    <path d="M434 637L419 644" stroke="#1a1a8a" strokeWidth="4" />
    <path d="M434 637V618" stroke="#1a6a24" strokeWidth="4" />
    <path d="M449 638l8 7-10 2z" fill="#d82020" />
    <path d="M420 639l-7 7 9 2z" fill="#2020d8" />
    <path d="M429 619l5-9 5 9z" fill="#2a8a36" />
    <g fontSize="11" fontFamily="'DejaVu Sans Condensed', 'DejaVu Sans', sans-serif">
      <text x="430" y="609" fill="#1f8a2a">Y</text>
      <text x="455" y="650" fill="#d82020">X</text>
      <text x="407" y="652" fill="#2020c0">Z</text>
    </g>
  </svg>
)

const taskTabs = [
  ['Resources', <><path d="M2 8l6-6 6 6v7H2z" fill="#fbe48a" stroke="#6a4a10" /><path d="M0 8l8-7 8 7" stroke="#a8741a" strokeWidth="1.500" /><path d="M6 10h4v5H6z" fill="#fff" stroke="#6a4a10" /><path d="M11 1h3v4" stroke="#c03a20" /></>],
  ['Design Library', <><path d="M.5 7l3-2 2 1v9h-5z" fill="#3fae49" stroke="#125a1c" /><path d="M5.500 5l3-3 2 1v11l-3 1-2-1z" fill="#f2d43c" stroke="#6a5a10" /><path d="M10.500 3l3-2 2 1v11l-3 2-2-1z" fill="#6aa4e4" stroke="#1c3a7a" /></>],
  ['File Explorer', <><path d="M1 3h5l2 2h6v9H1z" fill="#f6cf6a" stroke="#8a6416" /><path d="M1 14l3-7h12l-3 7z" fill="#fde9a4" stroke="#8a6416" /></>],
  ['View Palette', <><path d="M.5.5h15v9H.5z" fill="#fff" stroke="#2a3a5a" /><path d="M3 2.500h4v2H3zM3 6.500h4v2H3z" fill="#e8d850" stroke="#555" strokeWidth=".7" /><path d="M10 1v9M10 5h5" stroke="#2a3a5a" /><path d="M1 13h6M5 10.500L8 13l-3 2.500" stroke="#1020a0" strokeWidth="1.500" /></>],
  ['Appearances', ballArt],
  ['Custom Properties', <g key="a" opacity=".85"><path d="M1 5h12v10H1z" fill="#fff" stroke="#70727c" /><path d="M3 8h2M7 8.500h4M3 12h2M7 12h4" stroke="#888" /><path d="M4 5l4-4h7v4l-5 2-2-1z" fill="#dba57a" stroke="#6a4020" strokeWidth=".8" /></g>],
]

const Viewport = () => (
  <main className="relative min-w-0 flex-1 overflow-hidden border-r border-[#6b6d85] bg-[#fdfdfd]">
    <Model />
    <div className="absolute top-[5px] left-[2px] flex items-center text-black">
      <svg width="14" height="9" viewBox="0 0 14 9" fill="none" stroke="#222"><path d="M.5.5h8v8h-8zM2.500 4.500h4M4.500 2.500v4" /><path d="M9 4.500h5" stroke="#888" /></svg>
      <Icon size={18}>{partArt}</Icon>
      <span className="pl-[3px] whitespace-pre">Part1  (Default&lt;&lt;Default&gt;_...</span>
    </div>
    <button aria-label="Collapse panel" className="absolute top-[255px] -left-px flex h-[29px] w-[9px] flex-col items-center justify-evenly rounded-r border border-[#6b6d85] bg-[#d5d7e6]">
      {[0, 1, 2].map(i => <svg key={i} width="4" height="6" viewBox="0 0 4 6"><path d="M4 0v6L0 3z" fill="#33355a" /></svg>)}
    </button>
    <button aria-label="Accept" className="absolute top-[8px] right-[74px]"><Icon size={28}><path d="M1 8l2-2 3 4 8-8 1 1-9 11z" fill="#c3ecc3" stroke="#a9cfa9" strokeWidth=".6" /></Icon></button>
    <button aria-label="Discard" className="absolute top-[38px] right-[43px]"><Icon size={26}><path d="M2 3l2-1 4 4 4-4 2 1-4 5 4 5-2 1-4-4-4 4-2-1 4-5z" fill="#f6bcc0" stroke="#dcb0b2" strokeWidth=".6" /></Icon></button>
    <nav className="absolute top-[36px] right-0 flex flex-col">
      {taskTabs.map(([label, art]) => (
        <button key={label} aria-label={label} className={`flex h-[24px] w-[25px] items-center justify-center rounded-l border border-r-0 border-[#6f7188] ${label === 'Appearances' ? 'bg-[#f3f4f9]' : 'bg-[#b3b5ce]'}`}>
          <Icon>{art}</Icon>
        </button>
      ))}
    </nav>
    <p className="absolute right-[6px] bottom-px font-['Liberation_Sans',Arial,sans-serif] text-[24px] leading-[28px] text-[#b4b4b6]">video-tutorials.net</p>
  </main>
)

const StatusBar = () => (
  <footer className="flex h-[19px] shrink-0 items-center border-t border-[#5a5b70] bg-linear-to-b from-[#d3d5e6] to-[#b9bbd0] pt-[3px] pr-[3px] pl-[2px] font-['Noto_Sans','Open_Sans',sans-serif] text-[11px] text-[#15161f]">
    <span className="flex-1">SolidWorks</span>
    <span className="w-[104px]">Editing Part</span>
    <span className="flex w-[128px] items-center gap-[8px] text-[#a3a5b8]">MMGS <svg width="5" height="4" viewBox="0 0 5 4"><path d="M0 4h5L2.500 0z" fill="#8b8da0" /></svg></span>
    <Icon><path d="M1 11l7-8 5-1 2 3-1 4-7 6z" fill="#f8c83a" stroke="#a8741a" /><circle cx="12" cy="5" r="1.200" fill="#fff" stroke="#a8741a" /><path d="M5 10l5-5M7 12l4-4" stroke="#b8841a" /></Icon>
    <svg width="12" height="12" viewBox="0 0 12 12" className="ml-[14px]" fill="#eef0f8"><path d="M9 1h2v2H9zM6 5h2v2H6zM9 5h2v2H9zM3 9h2v2H3zM6 9h2v2H6zM9 9h2v2H9z" /></svg>
  </footer>
)

const App = () => {
  return (
    <div className="flex h-screen bg-black px-[190px] py-[10px] font-['DejaVu_Sans_Condensed','DejaVu_Sans',sans-serif] text-[11px]">
      <div className="flex min-w-0 flex-1 flex-col bg-[#e0e2ee] pl-[7px]">
        <TopBar />
        <Ribbon />
        <CommandRow />
        <div className="flex min-h-0 flex-1">
          <PropertyPanel />
          <Viewport />
        </div>
        <StatusBar />
      </div>
    </div>
  )
}

export default App
